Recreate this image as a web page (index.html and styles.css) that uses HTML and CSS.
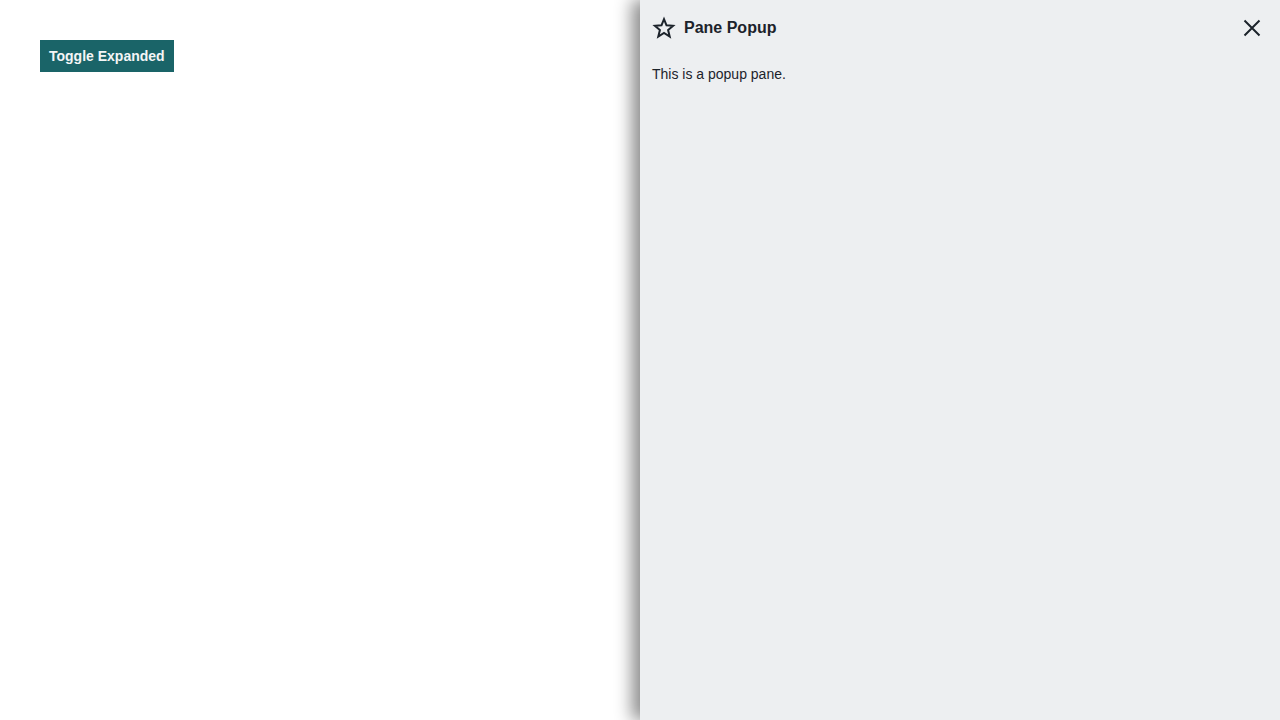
FILE: index.html
```html
<!DOCTYPE html>
<html>
<head>
<meta charset="utf-8">
<link rel="stylesheet" href="styles.css">
</head>
<body>
<main class="main">
  <button class="toggle">Toggle Expanded</button>
</main>
<aside class="pane">
  <header class="pane-header">
    <svg class="star" width="24" height="24" viewBox="0 0 24 24"><path d="M12 3.2l2.5 6.1 6.6.5-5 4.3 1.6 6.4L12 17l-5.7 3.5 1.6-6.4-5-4.3 6.6-.5z" fill="none" stroke="#1c232b" stroke-width="2" stroke-linejoin="miter"/></svg>
    <h2 class="pane-title">Pane Popup</h2>
    <button class="close" aria-label="Close"><svg width="24" height="24" viewBox="0 0 24 24"><path d="M4.5 4.5l15 15M19.5 4.5l-15 15" stroke="#1c232b" stroke-width="2" fill="none"/></svg></button>
  </header>
  <p class="pane-body">This is a popup pane.</p>
</aside>
</body>
</html>
```
FILE: styles.css
```css
html, body { margin: 0; padding: 0; height: 100%; }
body {
  font-family: "Liberation Sans", Arial, sans-serif;
  background: #fff;
  display: flex;
  overflow: hidden;
}
.main { flex: 1; padding: 40px; }
.toggle {
  background: #1a6468;
  color: #f4f6f6;
  border: none;
  height: 32px;
  padding: 0 9px;
  font-family: "Liberation Sans", Arial, sans-serif;
  font-weight: bold;
  font-size: 14px;
  cursor: pointer;
}
.pane {
  width: 640px;
  height: 720px;
  background: #edeff1;
  box-shadow: -8px 0 16px rgba(0,0,0,0.45);
  color: #1c232b;
}
.pane-header {
  display: flex;
  align-items: center;
  height: 56px;
  padding: 0 16px 0 12px;
}
.star { width: 24px; height: 24px; margin-right: 8px; }
.pane-title { margin: 0; font-size: 16px; font-weight: bold; flex: 1; }
.close { background: none; border: none; padding: 0; width: 24px; height: 24px; cursor: pointer; }
.pane-body { margin: 10px 0 0; padding: 0 12px; font-size: 14px; line-height: 16px; }
```
